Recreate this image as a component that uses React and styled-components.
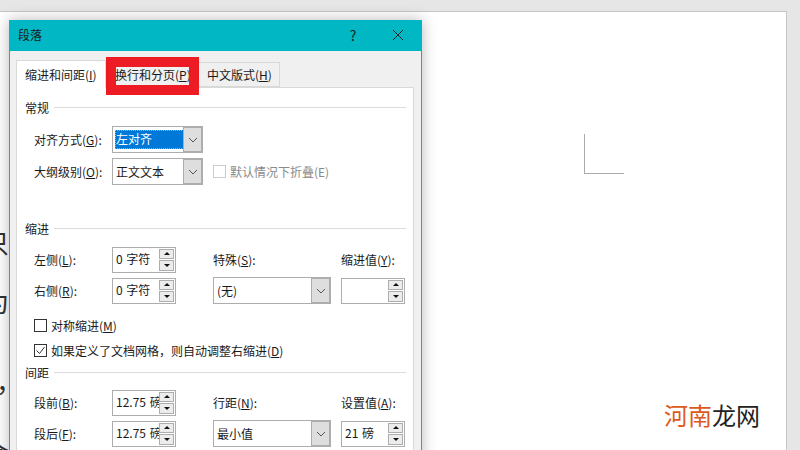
import React from 'react';
import styled, { createGlobalStyle } from 'styled-components';

const Global = createGlobalStyle`
    html, body { margin: 0; padding: 0; background: #e6e6e6; }
    body { font-family: "Noto Sans CJK SC", "Noto Sans", sans-serif; font-size: 12px; color: #1a1a1a; }
`;

const Screen = styled.div`
    position: relative;
    width: 800px;
    height: 450px;
    overflow: hidden;
    background: #e6e6e6;
    padding-top: 11px;
    box-sizing: border-box;
`;

const Page = styled.div`
    position: relative;
    width: 787px;
    height: 439px;
    box-sizing: border-box;
    background: #fff;
    border-top: 1px solid #c6c6c6;
    border-right: 1px solid #c6c6c6;
`;

const CropMark = styled.div`
    position: absolute;
    left: 584px;
    top: 122px;
    width: 39px;
    height: 39px;
    border-left: 1px solid #ababab;
    border-bottom: 1px solid #ababab;
`;

const PageGlyph = styled.span`
    position: absolute;
    left: ${p => p.$x}px;
    top: ${p => p.$y}px;
    font-size: 26px;
    line-height: 30px;
    color: #333;
`;

const Dialog = styled.div`
    position: absolute;
    left: 9px;
    top: 20px;
    width: 413px;
    height: 470px;
    box-sizing: border-box;
    background: #f0f0f0;
    border: 1px solid #00b7c3;
    box-shadow: 0 0 14px rgba(0, 0, 0, 0.28);
`;

const TitleBar = styled.div`
    display: flex;
    align-items: center;
    height: 30px;
    background: #00b7c3;
    padding: 0 0 3px 8px;
    box-sizing: border-box;
`;

const TitleText = styled.span`
    flex: 1;
`;

const TitleButton = styled.span`
    display: flex;
    align-items: center;
    justify-content: center;
    width: ${p => p.$w}px;
    font-size: 14px;
`;

const TabRow = styled.div`
    display: flex;
    align-items: flex-end;
    height: 36px;
    padding-left: 6px;
`;

const Tab = styled.div`
    display: flex;
    align-items: center;
    box-sizing: border-box;
    height: ${p => (p.$active ? 28 : 25)}px;
    width: ${p => p.$w}px;
    padding-left: ${p => p.$pad}px;
    background: ${p => (p.$active ? '#fff' : '#f0f0f0')};
    border: 1px solid #d9d9d9;
    border-bottom: ${p => (p.$active ? 'none' : '1px solid #d9d9d9')};
    margin-bottom: ${p => (p.$active ? -1 : 0)}px;
    position: relative;
    z-index: ${p => (p.$active ? 1 : 0)};
    margin-right: -1px;
`;

const Panel = styled.div`
    margin-left: 6px;
    width: 398px;
    height: 400px;
    box-sizing: border-box;
    background: #fff;
    border: 1px solid #d9d9d9;
    padding: 0 7px 0 8px;
`;

const SectionHead = styled.div`
    display: flex;
    align-items: center;
    gap: 5px;
    height: 18px;
    margin-top: ${p => p.$top}px;
    &::after {
        content: '';
        flex: 1;
        height: 1px;
        background: #dcdcdc;
    }
`;

const Row = styled.div`
    display: grid;
    grid-template-columns: 78px 101px 128px 64px;
    align-items: center;
    height: 27px;
    margin-top: ${p => p.$top}px;
    padding-left: 9px;
`;

const Label = styled.label`
    display: block;
    white-space: nowrap;
    ${p => p.$w && `width: ${p.$w}px;`}
`;

const U = styled.span`
    text-decoration: underline;
    text-underline-offset: 1px;
`;

const ComboBox = styled.div`
    display: flex;
    box-sizing: border-box;
    width: ${p => p.$w}px;
    height: 27px;
    background: #fff;
    border: 1px solid #adadad;
    padding-left: 2px;
    align-items: center;
    justify-content: space-between;
`;

const ComboValue = styled.span`
    box-sizing: border-box;
    height: ${p => (p.$focus ? '19px' : 'auto')};
    width: ${p => (p.$focus ? '71px' : 'auto')};
    line-height: 18px;
    padding-left: 1px;
    color: ${p => (p.$focus ? '#fff' : '#1a1a1a')};
    background: ${p => (p.$focus ? '#0078d7' : 'transparent')};
    outline: ${p => (p.$focus ? '1px dotted #f0a040' : 'none')};
    outline-offset: -1px;
`;

const ComboArrow = styled.span`
    display: flex;
    align-items: center;
    justify-content: center;
    align-self: stretch;
    width: 17px;
    margin: -1px;
    background: #dedede;
    border: 2px solid #adadad;
    border-left-width: 1px;
`;

const Spin = styled.div`
    display: flex;
    box-sizing: border-box;
    width: 64px;
    height: 26px;
    background: #fff;
    border: 1px solid #adadad;
    align-items: stretch;
    justify-content: space-between;
    padding-left: 3px;
    overflow: hidden;
`;

const SpinValue = styled.span`
    line-height: 22px;
    white-space: nowrap;
    overflow: hidden;
    word-spacing: 1px;
`;

const SpinButtons = styled.span`
    display: flex;
    flex: none;
    flex-direction: column;
    gap: 1px;
    width: 15px;
    padding: 1px 1px 1px 0;
`;

const SpinButton = styled.span`
    flex: 1;
    display: flex;
    align-items: center;
    justify-content: center;
    background: #ececec;
    border: 1px solid #adadad;
    &::before {
        content: '';
        border-left: 3.5px solid transparent;
        border-right: 3.5px solid transparent;
        ${p => (p.$down ? 'border-top: 3.5px solid #111;' : 'border-bottom: 3.5px solid #111;')}
    }
`;

const CheckRow = styled.div`
    display: flex;
    align-items: center;
    gap: 4px;
    height: 18px;
    margin-top: ${p => p.$top}px;
    padding-left: 9px;
    color: ${p => (p.$muted ? '#8a8a8a' : 'inherit')};
`;

const Box = styled.span`
    display: flex;
    align-items: center;
    justify-content: center;
    box-sizing: border-box;
    width: 13px;
    height: 13px;
    background: #fff;
    border: 1px solid ${p => (p.$muted ? '#cccccc' : '#333')};
`;

const OutlineRow = styled.div`
    display: flex;
    align-items: center;
    margin-top: 5px;
    padding-left: 9px;
    height: 27px;
`;

const OutlineCheck = styled(CheckRow)`
    margin: 0 0 0 10px;
    padding: 0;
`;

const Marker = styled.div`
    position: absolute;
    left: 106px;
    top: 57px;
    width: 93px;
    height: 38px;
    box-sizing: border-box;
    border: 10px solid #ed1c24;
`;

const Watermark = styled.div`
    position: absolute;
    left: 664px;
    top: 398px;
    font-size: 24px;
    line-height: 34px;
    color: #222;
`;

const Brand = styled.span`
    color: #dd5a1c;
`;

function Chevron() {
    return (
        <svg width="10" height="6" viewBox="0 0 10 6" fill="none" stroke="#555" strokeWidth="1">
            <path d="M1 1l4 4 4-4" />
        </svg>
    );
}

function Combo({ w, focus, children }) {
    return (
        <ComboBox $w={w}>
            <ComboValue $focus={focus}>{children}</ComboValue>
            <ComboArrow><Chevron /></ComboArrow>
        </ComboBox>
    );
}

function Spinner({ children }) {
    return (
        <Spin>
            <SpinValue>{children}</SpinValue>
            <SpinButtons>
                <SpinButton />
                <SpinButton $down />
            </SpinButtons>
        </Spin>
    );
}

export default function App() {
    return (
        <Screen>
            <Global />
            <Page>
                <CropMark />
                <PageGlyph $x={-17} $y={215}>只</PageGlyph>
                <PageGlyph $x={-17} $y={274}>为</PageGlyph>
                <PageGlyph $x={-4} $y={354}>，</PageGlyph>
                <PageGlyph $x={-17} $y={425}>会</PageGlyph>
            </Page>
            <Dialog>
                <TitleBar>
                    <TitleText>段落</TitleText>
                    <TitleButton $w={44}>?</TitleButton>
                    <TitleButton $w={46}>
                        <svg width="12" height="12" viewBox="0 0 12 12" fill="none" stroke="#222" strokeWidth="1">
                            <path d="M1 1l10 10M11 1L1 11" />
                        </svg>
                    </TitleButton>
                </TitleBar>
                <TabRow>
                    <Tab $active $w={90} $pad={8}><span>缩进和间距(<U>I</U>)</span></Tab>
                    <Tab $w={94} $pad={9}><span>换行和分页(<U>P</U>)</span></Tab>
                    <Tab $w={82} $pad={8}><span>中文版式(<U>H</U>)</span></Tab>
                </TabRow>
                <Panel>
                    <SectionHead $top={10}>常规</SectionHead>
                    <Row $top={10}>
                        <Label>对齐方式(<U>G</U>):</Label>
                        <Combo w={91} focus>左对齐</Combo>
                    </Row>
                    <OutlineRow>
                        <Label $w={78}>大纲级别(<U>O</U>):</Label>
                        <Combo w={91}>正文文本</Combo>
                        <OutlineCheck $muted><Box $muted /><span>默认情况下折叠(E)</span></OutlineCheck>
                    </OutlineRow>
                    <SectionHead $top={34}>缩进</SectionHead>
                    <Row $top={9}>
                        <Label>左侧(<U>L</U>):</Label>
                        <Spinner>0 字符</Spinner>
                        <Label>特殊(<U>S</U>):</Label>
                        <Label>缩进值(<U>Y</U>):</Label>
                    </Row>
                    <Row $top={4}>
                        <Label>右侧(<U>R</U>):</Label>
                        <Spinner>0 字符</Spinner>
                        <Combo w={118}>(无)</Combo>
                        <Spinner />
                    </Row>
                    <CheckRow $top={12}><Box /><span>对称缩进(<U>M</U>)</span></CheckRow>
                    <CheckRow $top={7}>
                        <Box>
                            <svg width="11" height="11" viewBox="0 0 11 11" fill="none" stroke="#333" strokeWidth="1">
                                <path d="M1.5 5.5l3 3 5-6.5" />
                            </svg>
                        </Box>
                        <span>如果定义了文档网格，则自动调整右缩进(<U>D</U>)</span>
                    </CheckRow>
                    <SectionHead $top={4}>间距</SectionHead>
                    <Row $top={8}>
                        <Label>段前(<U>B</U>):</Label>
                        <Spinner>12.75 磅</Spinner>
                        <Label>行距(<U>N</U>):</Label>
                        <Label>设置值(<U>A</U>):</Label>
                    </Row>
                    <Row $top={4}>
                        <Label>段后(<U>F</U>):</Label>
                        <Spinner>12.75 磅</Spinner>
                        <Combo w={118}>最小值</Combo>
                        <Spinner>21 磅</Spinner>
                    </Row>
                </Panel>
            </Dialog>
            <Marker />
            <Watermark><Brand>河南</Brand>龙网</Watermark>
        </Screen>
    );
}
